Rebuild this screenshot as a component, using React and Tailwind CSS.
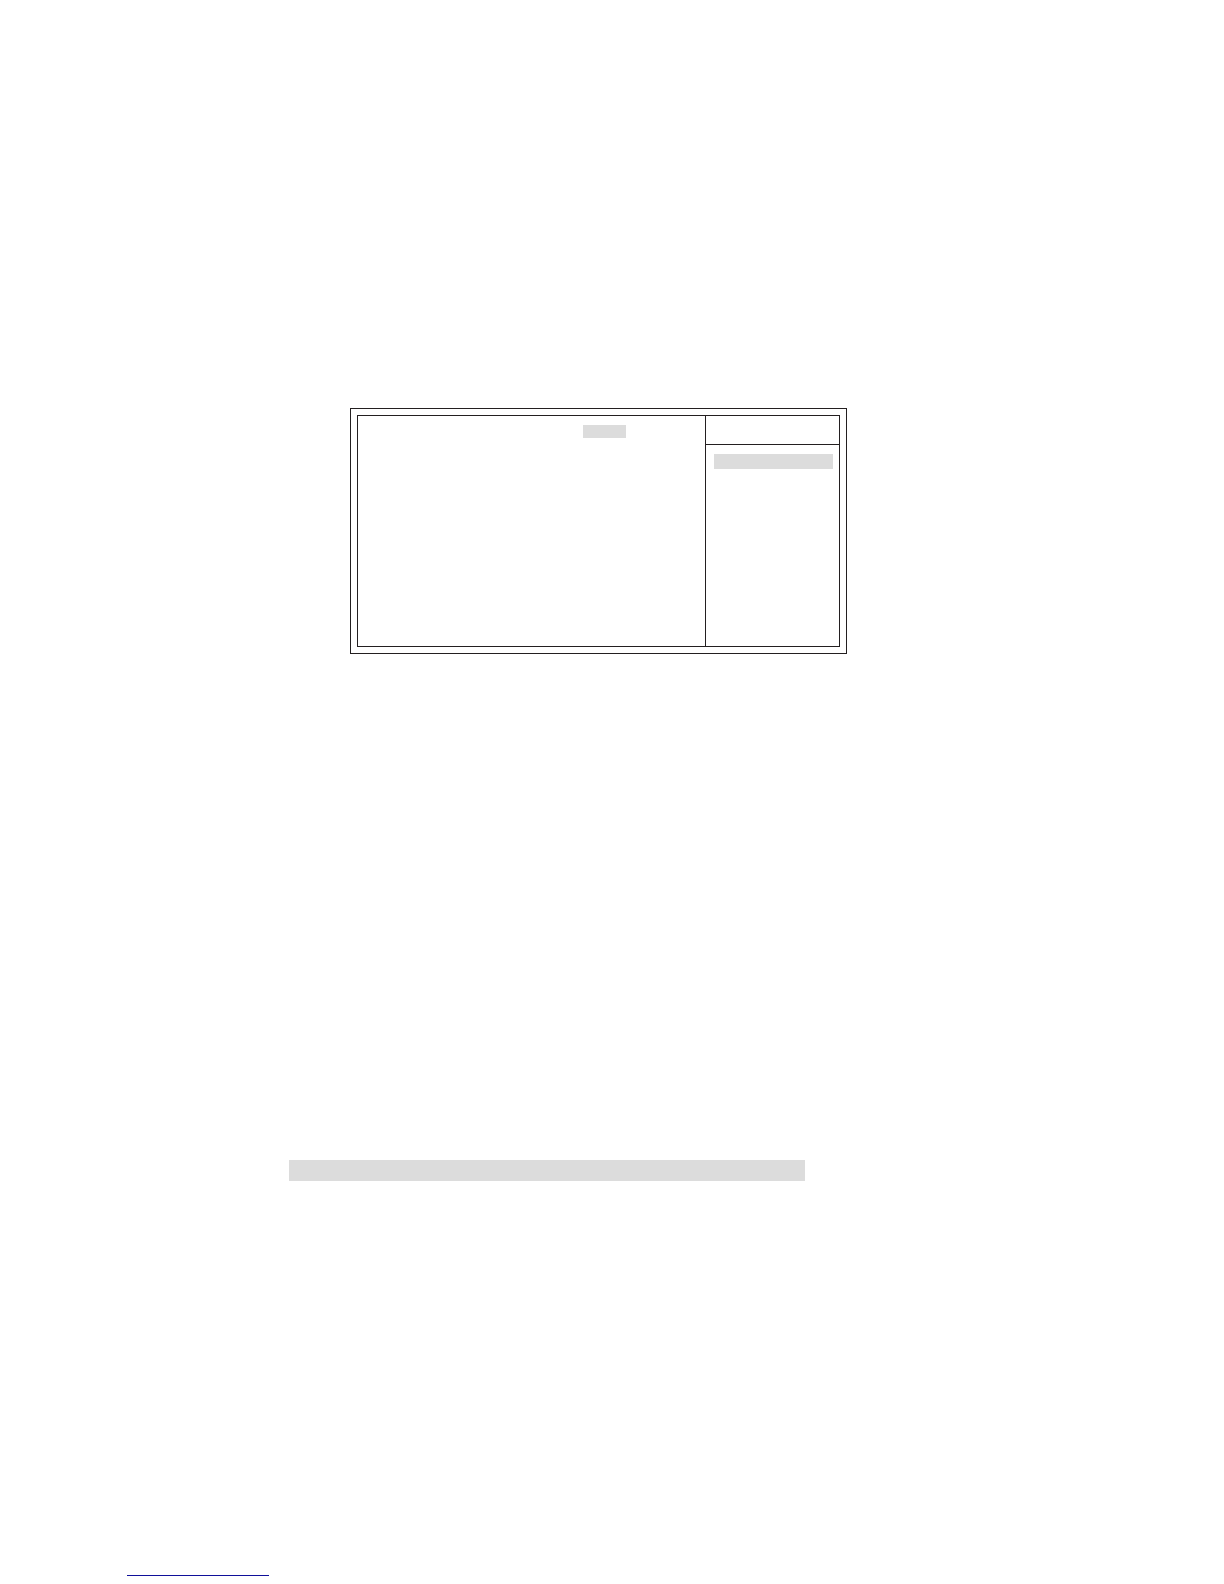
function Highlight({ className }) {
  return <div className={`bg-[#dcdcdc] ${className}`} />
}

function SetupScreen() {
  return (
    <section className="flex w-full max-w-[497px] border border-[#231f20] p-[6px]">
      <div className="flex h-[232px] flex-1 border border-[#231f20]">
        <div className="flex flex-1 items-start justify-end pt-[9px] pr-[79px]">
          <Highlight className="h-[13px] w-[43px]" />
        </div>

        {/* Help column */}
        <aside className="flex w-[134px] flex-col border-l border-[#231f20]">
          <header className="h-[29px] border-b border-[#231f20]" />
          <div className="flex-1 pt-[9px] pr-[6px] pl-2">
            <Highlight className="h-[15px] w-full" />
          </div>
        </aside>
      </div>
    </section>
  )
}

export default function App() {
  return (
    <div className="flex min-h-screen flex-col bg-white">
      <main className="flex-1 pt-[408px]">
        <div className="pl-[350px]">
          <SetupScreen />
        </div>
        <div className="mt-[506px] pl-[289px]">
          <Highlight className="h-[21px] w-full max-w-[516px]" />
        </div>
      </main>

      <footer className="pb-2 pl-[127px]">
        <div className="h-px w-[142px] bg-[#10109a]" />
      </footer>
    </div>
  )
}
